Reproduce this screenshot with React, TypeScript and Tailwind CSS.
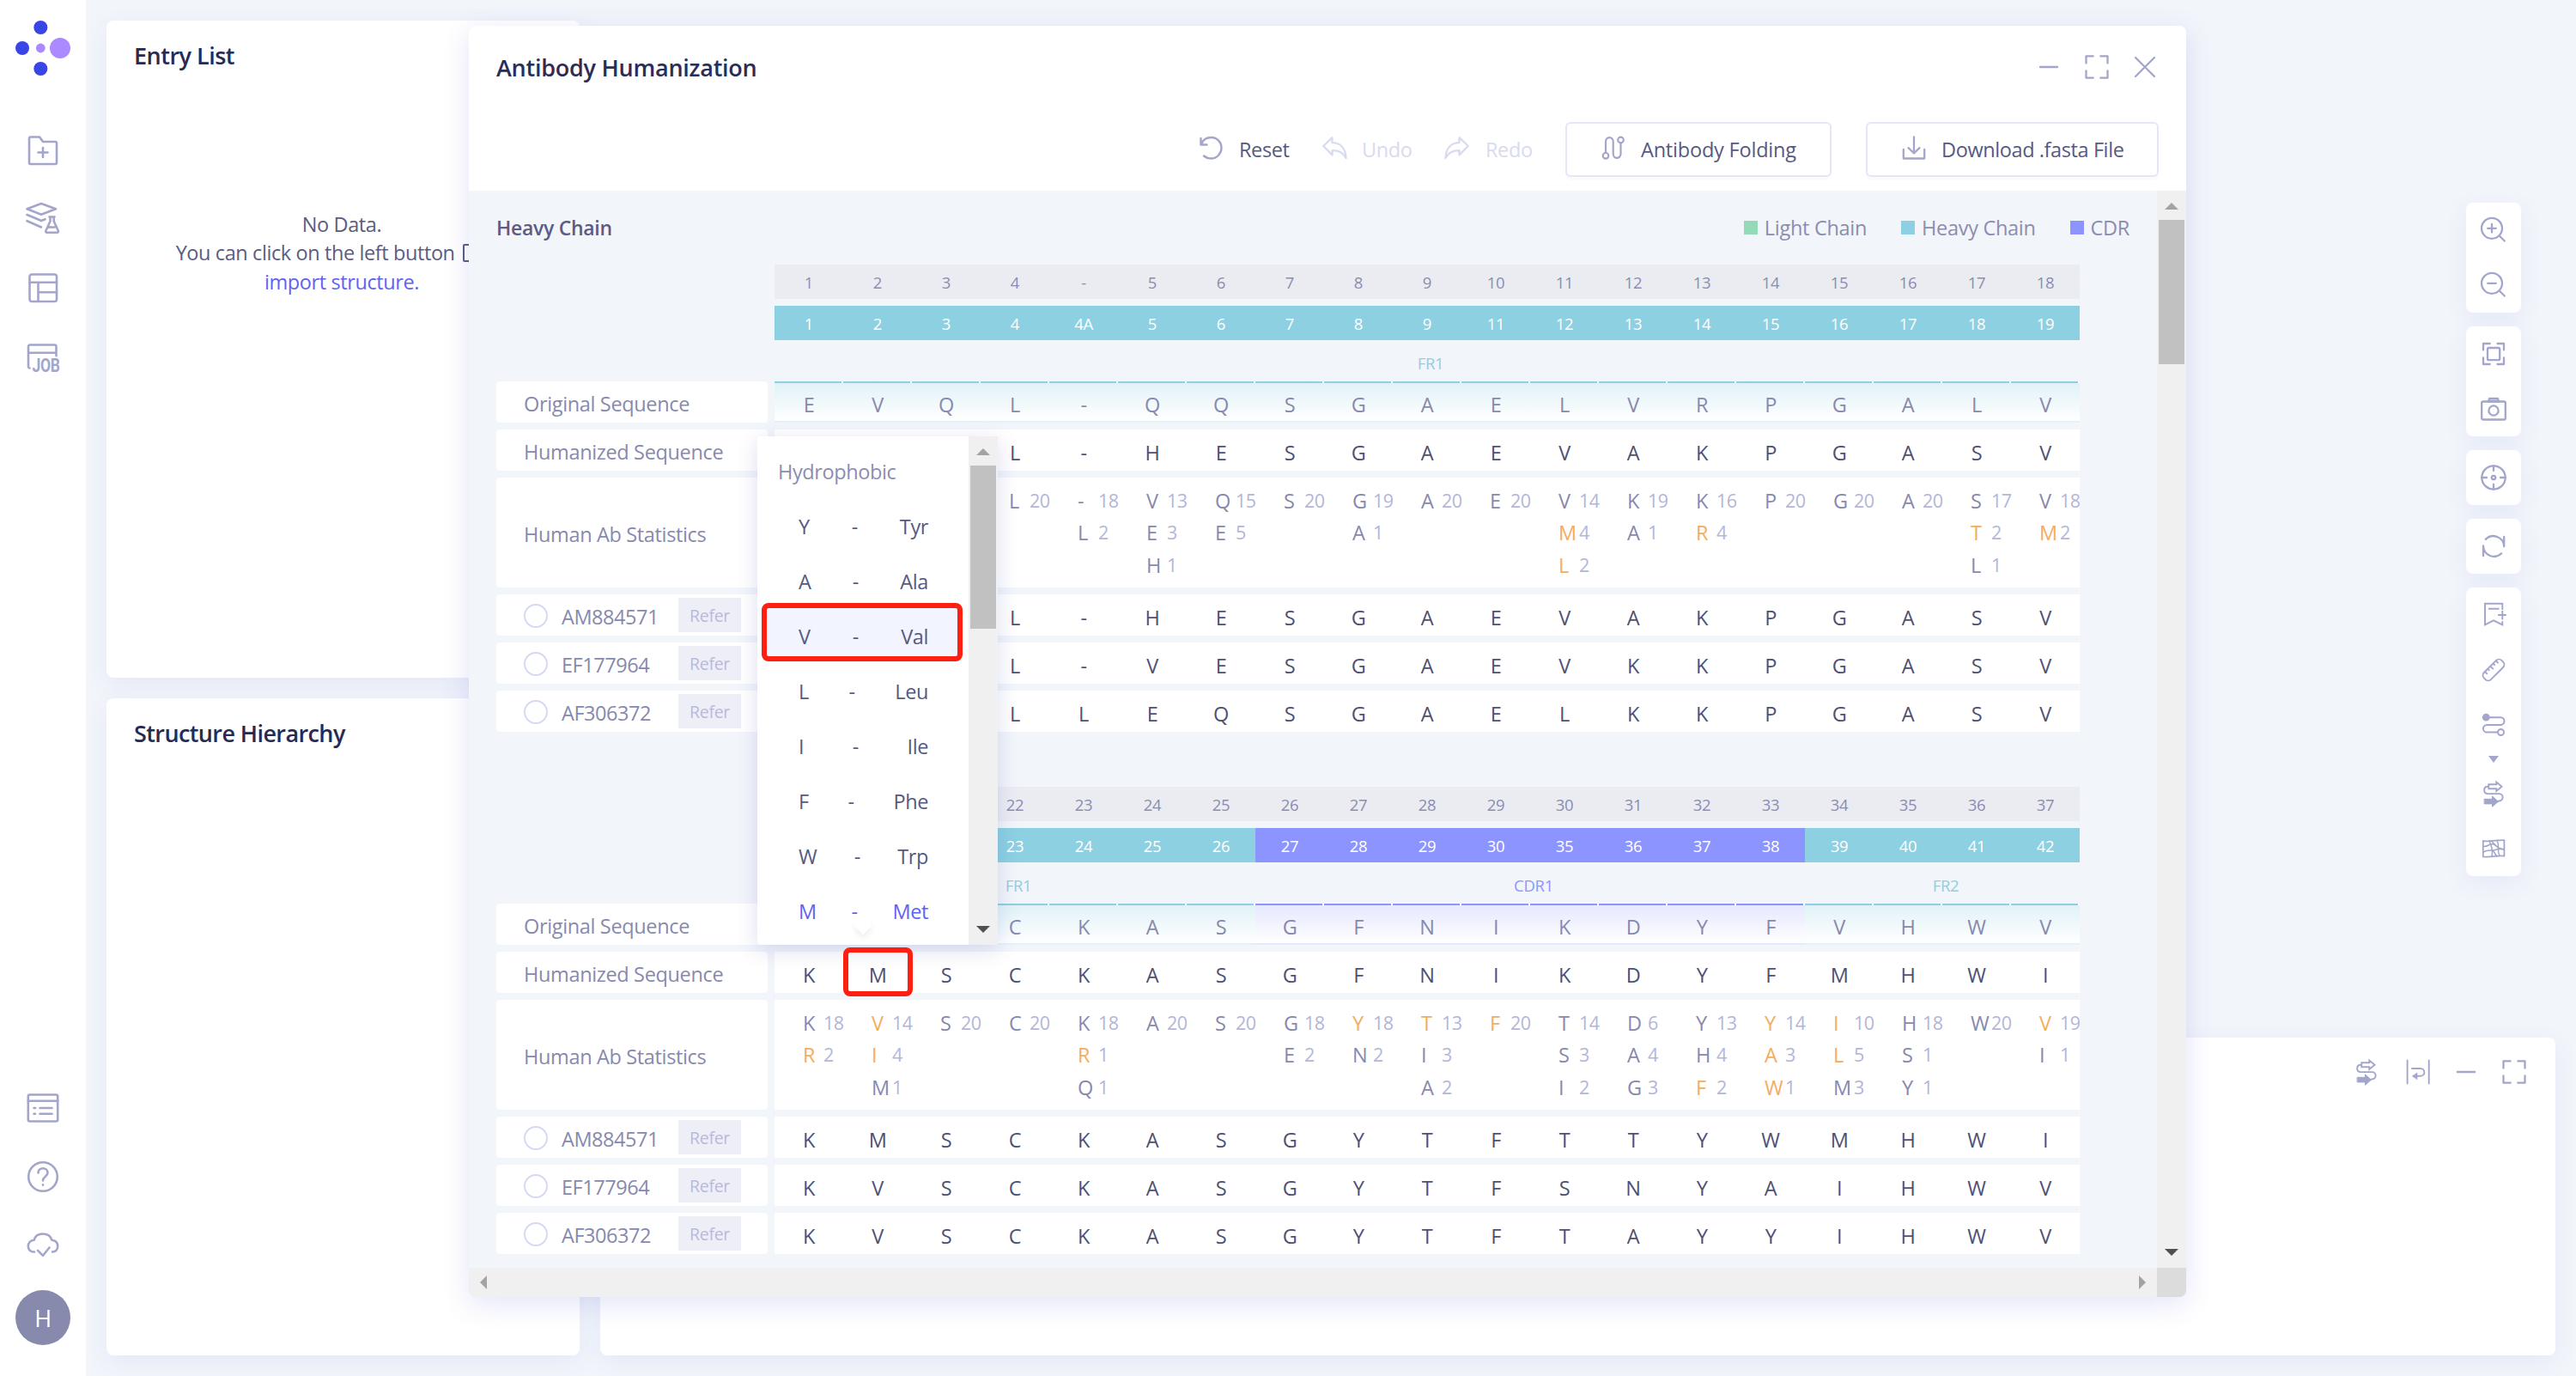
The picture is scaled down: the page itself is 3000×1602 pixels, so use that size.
import type { ReactNode } from "react";

type Stat = [letter: string, count: number, highlighted?: boolean];

interface Band {
  label: string;
  kind: "fr" | "cdr";
  span: number;
}

interface Group {
  top: string[];
  bottom: string[];
  bands: Band[];
  original: string;
  humanized: string;
  stats: Stat[][];
  refs: { id: string; seq: string }[];
}

const groups: Group[] = [
  {
    top: ["1", "2", "3", "4", "-", "5", "6", "7", "8", "9", "10", "11", "12", "13", "14", "15", "16", "17", "18"],
    bottom: ["1", "2", "3", "4", "4A", "5", "6", "7", "8", "9", "11", "12", "13", "14", "15", "16", "17", "18", "19"],
    bands: [{ label: "FR1", kind: "fr", span: 19 }],
    original: "EVQL-QQSGAELVRPGALV",
    humanized: "   L-HESGAEVAKPGASV",
    stats: [
      [],
      [],
      [],
      [["L", 20]],
      [["-", 18], ["L", 2]],
      [["V", 13], ["E", 3], ["H", 1]],
      [["Q", 15], ["E", 5]],
      [["S", 20]],
      [["G", 19], ["A", 1]],
      [["A", 20]],
      [["E", 20]],
      [["V", 14], ["M", 4, true], ["L", 2, true]],
      [["K", 19], ["A", 1]],
      [["K", 16], ["R", 4, true]],
      [["P", 20]],
      [["G", 20]],
      [["A", 20]],
      [["S", 17], ["T", 2, true], ["L", 1]],
      [["V", 18], ["M", 2, true]],
    ],
    refs: [
      { id: "AM884571", seq: "   L-HESGAEVAKPGASV" },
      { id: "EF177964", seq: "   L-VESGAEVKKPGASV" },
      { id: "AF306372", seq: "   LLEQSGAELKKPGASV" },
    ],
  },
  {
    top: ["", "", "", "22", "23", "24", "25", "26", "27", "28", "29", "30", "31", "32", "33", "34", "35", "36", "37"],
    bottom: ["", "", "", "23", "24", "25", "26", "27", "28", "29", "30", "35", "36", "37", "38", "39", "40", "41", "42"],
    bands: [
      { label: "FR1", kind: "fr", span: 7 },
      { label: "CDR1", kind: "cdr", span: 8 },
      { label: "FR2", kind: "fr", span: 4 },
    ],
    original: "   CKASGFNIKDYFVHWV",
    humanized: "KMSCKASGFNIKDYFMHWI",
    stats: [
      [["K", 18], ["R", 2, true]],
      [["V", 14, true], ["I", 4, true], ["M", 1]],
      [["S", 20]],
      [["C", 20]],
      [["K", 18], ["R", 1, true], ["Q", 1]],
      [["A", 20]],
      [["S", 20]],
      [["G", 18], ["E", 2]],
      [["Y", 18, true], ["N", 2]],
      [["T", 13, true], ["I", 3], ["A", 2]],
      [["F", 20, true]],
      [["T", 14], ["S", 3], ["I", 2]],
      [["D", 6], ["A", 4], ["G", 3]],
      [["Y", 13], ["H", 4], ["F", 2, true]],
      [["Y", 14, true], ["A", 3, true], ["W", 1, true]],
      [["I", 10, true], ["L", 5, true], ["M", 3]],
      [["H", 18], ["S", 1], ["Y", 1]],
      [["W", 20]],
      [["V", 19, true], ["I", 1]],
    ],
    refs: [
      { id: "AM884571", seq: "KMSCKASGYTFTTYWMHWI" },
      { id: "EF177964", seq: "KVSCKASGYTFSNYAIHWV" },
      { id: "AF306372", seq: "KVSCKASGYTFTAYYIHWV" },
    ],
  },
];

const aminoAcids = [
  ["Y", "Tyr"],
  ["A", "Ala"],
  ["V", "Val"],
  ["L", "Leu"],
  ["I", "Ile"],
  ["F", "Phe"],
  ["W", "Trp"],
  ["M", "Met"],
];

/* ---------- icons ---------- */

function Icon({ size = 32, width = 2.2, className = "", children }: { size?: number; width?: number; className?: string; children: ReactNode }) {
  return (
    <svg
      width={size}
      height={size}
      viewBox={`0 0 ${size} ${size}`}
      fill="none"
      stroke="currentColor"
      strokeWidth={width}
      strokeLinecap="round"
      strokeLinejoin="round"
      className={`shrink-0 overflow-visible ${className}`}
    >
      {children}
    </svg>
  );
}

const Logo = () => (
  <svg width="66" height="66" viewBox="0 0 66 66" className="shrink-0">
    <circle cx="30.3" cy="9" r="8" fill="#3a45e6" />
    <circle cx="9" cy="33" r="8" fill="#3a45e6" />
    <circle cx="30.3" cy="57" r="8" fill="#3a45e6" />
    <circle cx="30.3" cy="33" r="5.4" fill="#ab89ff" />
    <circle cx="53" cy="33" r="12" fill="#ab89ff" />
  </svg>
);

const FolderPlus = () => (
  <Icon size={40} width={2.6}>
    <path d="M4 34.5V6a1.5 1.5 0 0 1 1.5-1.5H16l4 5.5h14.5A1.5 1.5 0 0 1 36 11.500v23a1.500 1.500 0 0 1-1.500 1.500h-29A1.500 1.500 0 0 1 4 34.500ZM20 17v11M14.500 22.500h11" />
  </Icon>
);
const LayersFlask = () => (
  <Icon size={40} width={2.6}>
    <path d="M18 2 35 8.300 18 14.800 1.500 8.300ZM1.500 15 18 22l4.500-1.700M1.500 22.200 18 29.500" />
    <path d="M27.500 17.500h6M28.500 17.500v5L23.500 33.500q-.8 2.200 1.300 2.200h11.600q2.100 0 1.300-2.200l-5-11v-5M26 30c3-2 5 1.500 9.500-1.500" />
  </Icon>
);
const LayoutIcon = () => (
  <Icon size={40} width={2.6}>
    <rect x="4.500" y="4.500" width="31.500" height="31.500" rx="2.500" />
    <path d="M4.500 13.800H36M14.500 13.800V36M14.500 25.200H36" />
  </Icon>
);
const JobIcon = () => (
  <Icon size={40} width={2.6}>
    <path d="M4.500 33.500A1.800 1.800 0 0 1 3 32V8.500a2 2 0 0 1 2-2h28.500a2 2 0 0 1 2 2v10.800M3 15.800h32.500" />
    <text x="7.500" y="37.800" fontSize="21.500" fontWeight="700" textLength="32" lengthAdjust="spacingAndGlyphs" fill="currentColor" stroke="none" fontFamily="Roboto, sans-serif">
      JOB
    </text>
  </Icon>
);
const ListIcon = () => (
  <Icon size={40} width={2.6}>
    <rect x="2.800" y="4.500" width="34.400" height="31" rx="2" />
    <path d="M2.800 11.700h34.400M9.500 20h1.500M16.500 20h14M9.500 26.800h1.500M16.500 26.800h14" />
  </Icon>
);
const HelpIcon = () => (
  <Icon size={40} width={2.6}>
    <circle cx="20" cy="20" r="16.800" />
    <path d="M14.500 15.500c0-3.200 2.300-5.300 5.500-5.300s5.500 2.200 5.500 5.200c0 4.200-5.500 4.400-5.500 9M20 29.300v.4" />
  </Icon>
);
const CloudCheck = () => (
  <Icon size={40} width={2.600}>
    <path d="M10 27.500C5.500 27.800 2.800 25 2.800 20.800c0-4 2.900-6.800 6.900-7.100C10.800 9.200 14.700 6.500 20 6.500s9 2.800 10.300 7.200c4.200.4 6.900 3.100 6.900 7.300 0 4-2.500 6.500-6.200 6.500M14 25.800l6 6 7.500-9.300" />
  </Icon>
);

const ZoomIn = () => (
  <Icon width={2.300}>
    <circle cx="14" cy="13.800" r="12" />
    <path d="M14 9v9.600M9.200 13.800h9.600M22.800 22.500l6 6" />
  </Icon>
);
const ZoomOut = () => (
  <Icon width={2.300}>
    <circle cx="14" cy="13.800" r="12" />
    <path d="M9.200 13.800h9.600M22.800 22.500l6 6" />
  </Icon>
);
const FocusIcon = () => (
  <Icon width={2.300}>
    <path d="M4 11.500V4h7.700M20.500 4H28v7.500M28 20.500V28h-7.500M11.700 28H4v-7.500" />
    <rect x="9" y="9" width="14.200" height="14.200" rx="1.500" />
  </Icon>
);
const CameraIcon = () => (
  <Icon width={2.300}>
    <path d="M10 7.500 11.200 3.800h9.600L22 7.500Z" fill="#c6c8e0" />
    <rect x="2.200" y="7.500" width="27.600" height="21" rx="1.500" />
    <circle cx="16" cy="18" r="5.600" />
  </Icon>
);
const CrosshairIcon = () => (
  <Icon width={2.300}>
    <circle cx="16" cy="16" r="13.700" />
    <circle cx="16" cy="16" r="2.200" />
    <path d="M16 2.500v5.500M16 24v5.500M2.500 16H8M24 16h5.500" />
  </Icon>
);
const RefreshIcon = () => (
  <Icon width={2.300}>
    <path d="M6.800 7.900A12.500 12.500 0 0 1 28.200 16M28.200 5v11.300M25.200 24.300A12.500 12.500 0 0 1 4 16M4 27.200V15.500" />
  </Icon>
);
const BookmarkPlus = () => (
  <Icon width={1.900}>
    <path d="M26.300 10V2.800H6V27.400l10-5.100 10.300 5.100V23.300M10 8.800h12.500M26.300 11v10.500M21 16h9.800" strokeLinecap="butt" strokeLinejoin="miter" />
  </Icon>
);
const RulerIcon = () => (
  <Icon width={1.900}>
    <g transform="rotate(-45 16 16)">
      <rect x="1.500" y="10.300" width="29" height="11.400" rx="4.500" />
      <path d="M7.500 10.500v3M12 10.500v2M16.500 10.500v4M21 10.500v2M25.500 10.500v3" />
    </g>
  </Icon>
);
const RouteIcon = () => (
  <Icon width={2}>
    <circle cx="7.300" cy="7.200" r="3.400" fill="currentColor" />
    <path d="M8 7.200h16.200a4.300 4.300 0 0 1 0 8.700H8.300a4.300 4.300 0 0 0 0 8.700h12" />
    <circle cx="24.500" cy="24.500" r="3.500" />
  </Icon>
);
const TransferIcon = () => (
  <Icon width={1.900}>
    <path d="M10 7.800H8.700a4.200 4.200 0 0 0 0 8.300h13.600a4.100 4.100 0 0 1 .4 8.300l-2 .6" />
    <path d="M10.300 5.300h9V2.600l6.200 5.200-6.200 5.200v-2.700h-9Z" strokeLinejoin="miter" />
    <path d="M5.500 22.300h9V19l7 6.200-7 6v-3.300h-9Z" fill="currentColor" strokeWidth="1" />
  </Icon>
);
const MapIcon = () => (
  <Icon width={1.800}>
    <path d="M3.800 6.800c6 1.800 12-.8 24.600-.6v18.500c-8-1.500-15 2-24.600.7Z" />
    <path d="M4 13.500c6 .5 6-3 11-3 5 2 7 7 13 6.500M4 20c5-3 9-1.500 12-2s6-2.500 12-1.500M11 7c1 5 5 6 3 18.500M20 6.500c4 7-1 10 3 18M15 18l5 7M13 6.800l9 9" strokeWidth="1.500" />
  </Icon>
);
const WrapIcon = () => (
  <Icon width={1.900}>
    <path d="M3.600 2.500v27M28.700 2.500v27M9 12h9.500c6.500 0 6.500 8.800 0 8.800H11" />
    <path d="M9.500 20.800 15 17v7.600Z" fill="currentColor" strokeWidth=".6" />
  </Icon>
);
const MinusIcon = () => (
  <Icon width={2.400}>
    <path d="M6 16h20" />
  </Icon>
);
const FullscreenIcon = () => (
  <Icon width={2.300}>
    <path d="M3.500 11.500v-8.200h8.200M20.300 3.300h8.200v8.200M28.500 20.500v8.200h-8.200M11.700 28.700H3.500v-8.200" />
  </Icon>
);
const CloseIcon = () => (
  <Icon width={2.300}>
    <path d="M5 5l22 22M27 5 5 27" />
  </Icon>
);
const ResetIcon = () => (
  <Icon size={28} width={2.400}>
    <path d="M2.500 3v7.500h7M3 10C5 4.500 9.500 2 14.500 2 21.500 2 26.500 7.500 26.500 14s-5 12.500-12 12.500c-3.500 0-6-1-8.500-3" />
  </Icon>
);
const UndoIcon = () => (
  <Icon size={28} width={2.300}>
    <path d="M1.200 12 11.500 2.200v6C20 8.200 26.800 13.500 27.600 26c-3.600-6.300-8.500-9-16.100-8.800v5.200Z" />
  </Icon>
);
const RedoIcon = () => (
  <Icon size={28} width={2.300} className="-scale-x-100">
    <path d="M1.200 12 11.500 2.200v6C20 8.200 26.800 13.500 27.600 26c-3.600-6.300-8.500-9-16.100-8.800v5.200Z" />
  </Icon>
);
const FoldingIcon = () => (
  <Icon size={28} width={2.200}>
    <circle cx="5" cy="23.300" r="3.300" />
    <circle cx="22.500" cy="5" r="3.300" />
    <path d="M5 20V7c0-6.500 8.700-6.500 8.700 0v14c0 6.500 8.800 6.500 8.800 0V8.300" />
  </Icon>
);
const DownloadIcon = () => (
  <Icon size={28} width={2.300}>
    <path d="M14 1.500V20M7.500 14.200 14 20.500l6.500-6.300M1.800 16v10.500h24.400V16" />
  </Icon>
);

/* ---------- scroll bar pieces ---------- */

const ArrowUp = () => <span className="h-0 w-0 border-x-8 border-b-8 border-x-transparent border-b-[#a3a3a3]" />;
const ArrowDown = () => <span className="h-0 w-0 border-x-8 border-t-8 border-x-transparent border-t-[#505050]" />;
const ArrowLeft = () => <span className="h-0 w-0 border-y-8 border-r-8 border-y-transparent border-r-[#a3a3a3]" />;
const ArrowRight = () => <span className="h-0 w-0 border-y-8 border-l-8 border-y-transparent border-l-[#a3a3a3]" />;

/* ---------- sequence table ---------- */

function LabelBox({ tall = false, children }: { tall?: boolean; children: ReactNode }) {
  return (
    <div className={`flex w-[316px] shrink-0 items-center rounded bg-white pt-[3px] pl-8 tracking-[-0.35px] text-[#8789ad] ${tall ? "h-32" : "h-12"}`}>
      {children}
    </div>
  );
}

function SequenceRow({ label, seq }: { label: ReactNode; seq: string }) {
  return (
    <div className="flex gap-2">
      <LabelBox>{label}</LabelBox>
      <div className="grid w-[1520px] grid-cols-[repeat(19,80px)] bg-white pt-[5px] text-[#4d5077]">
        {seq.split("").map((c, i) => (
          <span key={i} className="flex items-center justify-center">
            {c.trim()}
          </span>
        ))}
      </div>
    </div>
  );
}

function SequenceGroup({ group }: { group: Group }) {
  const kinds = group.bands.flatMap((b) => Array<Band["kind"]>(b.span).fill(b.kind));
  return (
    <section>
      <div className="ml-[324px] w-[1520px] text-[18.500px] tracking-[-0.3px]">
        <div className="grid h-10 grid-cols-[repeat(19,80px)] bg-[#ebecf2] pt-[2px] text-[#8b8daf]">
          {group.top.map((n, i) => (
            <span key={i} className="flex items-center justify-center">
              {n}
            </span>
          ))}
        </div>
        <div className="mt-2 grid h-10 grid-cols-[repeat(19,80px)] text-white">
          {group.bottom.map((n, i) => (
            <span key={i} className={`flex items-center justify-center pt-[2px] ${kinds[i] === "fr" ? "bg-[#8cd0e1]" : "bg-[#8c95ff]"}`}>
              {n}
            </span>
          ))}
        </div>
        <div className="grid h-12 grid-cols-[repeat(19,80px)]">
          {group.bands.map((b, i) => (
            <span
              key={i}
              style={{ gridColumn: `span ${b.span}` }}
              className={`flex items-center justify-center pt-[6px] pl-2 ${b.kind === "fr" ? "text-[#8cd0e1]" : "text-[#8c95ff]"}`}
            >
              {b.label}
            </span>
          ))}
        </div>
      </div>

      <div className="flex flex-col gap-2">
        <div className="flex gap-2">
          <LabelBox>Original Sequence</LabelBox>
          <div className="grid h-12 w-[1520px] grid-cols-[repeat(19,80px)] text-[#8789ad]">
            {group.original.split("").map((c, i) => (
              <span
                key={i}
                className={`relative flex items-center justify-center border-y-2 bg-linear-to-b to-white pt-[5px] ${
                  kinds[i] === "fr" ? "border-t-[#8cd0e1] border-b-[#e2f3f7] from-[#e0f2f7]" : "border-t-[#8c95ff] border-b-[#e6e8ff] from-[#e6e8fe]"
                }`}
              >
                {c.trim()}
                <i className="absolute -top-[2px] right-0 h-[2px] w-[2px] bg-white" />
              </span>
            ))}
          </div>
        </div>

        <SequenceRow label="Humanized Sequence" seq={group.humanized} />

        <div className="flex gap-2">
          <LabelBox tall>Human Ab Statistics</LabelBox>
          <div className="grid w-[1520px] grid-cols-[repeat(19,80px)] overflow-hidden bg-white pt-2">
            {group.stats.map((cell, i) => (
              <div key={i} className="pl-[33px]">
                {cell.map(([letter, count, hot], j) => (
                  <div key={j} className={`flex h-[37.500px] items-center ${hot ? "text-[#f3ad60]" : "text-[#8789ad]"}`}>
                    <span className="w-6 shrink-0">{letter}</span>
                    <span className="text-[21.500px] tracking-[-0.6px] text-[#b3b6d8]">{count}</span>
                  </div>
                ))}
              </div>
            ))}
          </div>
        </div>

        {group.refs.map((r) => (
          <SequenceRow
            key={r.id}
            seq={r.seq}
            label={
              <>
                <span className="-mt-px h-7 w-7 shrink-0 rounded-full border-2 border-[#d5d9f4]" />
                <span className="w-[152px] shrink-0 pl-4 tracking-[-0.45px]">{r.id}</span>
                <span className="-mt-[3px] flex h-10 w-[73px] items-center justify-center bg-[#eeeff6] pt-[2px] text-[19.500px] tracking-[-0.3px] text-[#b7bade]">
                  Refer
                </span>
              </>
            }
          />
        ))}
      </div>
    </section>
  );
}

/* ---------- shell ---------- */

function Sidebar() {
  return (
    <nav className="flex h-full w-[100px] shrink-0 flex-col items-center bg-white pt-[23px] pb-9 text-[#a3a6ca]">
      <Logo />
      <div className="mt-[66px] flex flex-col gap-10">
        <FolderPlus />
        <LayersFlask />
        <LayoutIcon />
        <JobIcon />
      </div>
      <div className="mt-auto flex flex-col gap-10">
        <ListIcon />
        <HelpIcon />
        <CloudCheck />
      </div>
      <div className="mt-8 flex h-16 w-16 items-center justify-center rounded-full bg-[#888aad] pt-[2px] text-[27px] text-white">H</div>
    </nav>
  );
}

function Card({ className = "", children }: { className?: string; children?: ReactNode }) {
  return <div className={`rounded-lg bg-white shadow-[0_8px_28px_rgba(80,90,220,0.08)] ${className}`}>{children}</div>;
}

function ToolGroup({ children }: { children: ReactNode[] | ReactNode }) {
  return <Card className="flex w-16 flex-col items-center">{children}</Card>;
}

function Tool({ children }: { children: ReactNode }) {
  return <span className="flex h-16 w-16 items-center justify-center">{children}</span>;
}

function ViewerTools() {
  return (
    <div className="flex flex-col gap-4 text-[#a3a6ca]">
      <ToolGroup>
        <Tool><ZoomIn /></Tool>
        <Tool><ZoomOut /></Tool>
      </ToolGroup>
      <ToolGroup>
        <Tool><FocusIcon /></Tool>
        <Tool><CameraIcon /></Tool>
      </ToolGroup>
      <ToolGroup>
        <Tool><CrosshairIcon /></Tool>
      </ToolGroup>
      <ToolGroup>
        <Tool><RefreshIcon /></Tool>
      </ToolGroup>
      <ToolGroup>
        <Tool><BookmarkPlus /></Tool>
        <Tool><RulerIcon /></Tool>
        <Tool><RouteIcon /></Tool>
        <span className="flex h-4 items-center">
          <span className="h-0 w-0 border-x-[6px] border-t-8 border-x-transparent border-t-[#a3a6ca]" />
        </span>
        <Tool><TransferIcon /></Tool>
        <Tool><MapIcon /></Tool>
      </ToolGroup>
    </div>
  );
}

function ResiduePicker() {
  return (
    <div className="absolute top-[478px] left-[336px] flex h-[592px] w-[280px] overflow-hidden rounded-l bg-white shadow-[0_6px_24px_rgba(80,85,180,0.2)]">
      <div className="relative flex w-[246px] flex-col pt-[14px]">
        <p className="mb-[2px] flex h-[52px] items-center pt-[2px] pl-6 text-[#8b8daf]">Hydrophobic</p>
        <span className="absolute top-[561px] left-[115px] h-[16px] w-[16px] rotate-45 bg-white shadow-[3px_3px_7px_rgba(0,0,0,0.07)]" />
        {aminoAcids.map(([one, three]) => (
          <div
            key={one}
            className={`relative mx-[10px] flex h-16 shrink-0 items-center justify-between pt-[9px] pr-[37px] pl-[38px] ${
              one === "V" ? "bg-[#f2f5ff] text-[#565980]" : one === "M" ? "text-[#6062f6]" : "text-[#565980]"
            }`}
          >
            <span>{one}</span>
            <span>-</span>
            <span>{three}</span>
          </div>
        ))}
      </div>
      <div className="flex w-[34px] flex-col items-center bg-[#f0f0f0] pt-[14px] pb-[14px]">
        <ArrowUp />
        <div className="mt-3 h-[190px] w-[30px] bg-[#c1c1c1]" />
        <div className="mt-auto flex">
          <ArrowDown />
        </div>
      </div>
    </div>
  );
}

function Legend({ color, children }: { color: string; children: ReactNode }) {
  return (
    <span className="flex items-center gap-2 tracking-[-0.3px]">
      <i className={`h-4 w-4 ${color}`} />
      {children}
    </span>
  );
}

function HumanizationWindow() {
  return (
    <div className="absolute top-[30px] left-[546px] h-[1480px] w-[2000px] rounded-lg bg-[#f2f5fa] shadow-[0_8px_32px_rgba(80,90,220,0.16)]">
      <div className="flex h-full flex-col overflow-hidden rounded-lg">
        <header className="flex h-[192px] shrink-0 flex-col bg-white px-8">
          <div className="flex h-24 items-center justify-between">
            <h2 className="pt-px text-[27px] font-semibold tracking-[-0.25px] text-[#2b2d58]">Antibody Humanization</h2>
            <div className="flex gap-6 text-[#a3a6ca]">
              <MinusIcon />
              <FullscreenIcon />
              <CloseIcon />
            </div>
          </div>
          <div className="mt-4 flex items-center justify-end">
            <span className="flex w-[144px] items-center gap-[19px] text-[#565980]">
              <span className="-mt-[5px] text-[#a3a6ca]"><ResetIcon /></span>Reset
            </span>
            <span className="flex w-[143px] items-center gap-[18px] text-[#d8daf0]">
              <span className="-mt-[5px]"><UndoIcon /></span>Undo
            </span>
            <span className="flex w-[140px] items-center gap-[19px] text-[#d8daf0]">
              <span className="-mt-[5px]"><RedoIcon /></span>Redo
            </span>
            <button className="flex h-16 w-[310px] items-center gap-[18px] rounded-md border-2 border-[#e6e6f7] bg-white pl-[40px] tracking-[-0.2px] text-[#565980] shadow-[0_4px_0_rgba(0,0,0,0.016)]">
              <span className="-mt-[5px] text-[#a3a6ca]"><FoldingIcon /></span>Antibody Folding
            </button>
            <button className="ml-10 flex h-16 w-[341px] items-center gap-[18px] rounded-md border-2 border-[#e6e6f7] bg-white pl-[40px] text-[#565980] shadow-[0_4px_0_rgba(0,0,0,0.016)]">
              <span className="-mt-[5px] text-[#a3a6ca]"><DownloadIcon /></span>Download .fasta File
            </button>
          </div>
        </header>

        <div className="grid min-h-0 flex-1 grid-cols-[1966px_34px] grid-rows-[1254px_34px]">
          <div className="overflow-hidden px-8">
            <div className="flex h-[86px] items-center justify-between">
              <h3 className="text-[23px] font-semibold tracking-[-0.3px] text-[#5a5c84]">Heavy Chain</h3>
              <div className="flex gap-10 text-[#8b8daf]">
                <Legend color="bg-[#94d9b8]">Light Chain</Legend>
                <Legend color="bg-[#8cd0e1]">Heavy Chain</Legend>
                <Legend color="bg-[#8c95ff]">CDR</Legend>
              </div>
            </div>
            <div className="flex flex-col gap-16">
              {groups.map((g, i) => (
                <SequenceGroup key={i} group={g} />
              ))}
            </div>
          </div>
          <div className="flex flex-col items-center bg-[#f0f0f0] pt-[14px] pb-[14px]">
            <ArrowUp />
            <div className="mt-3 h-[168px] w-[30px] bg-[#c1c1c1]" />
            <div className="mt-auto flex">
              <ArrowDown />
            </div>
          </div>
          <div className="flex items-center justify-between bg-[#f0f0f0] pr-[13px] pl-[13px]">
            <ArrowLeft />
            <ArrowRight />
          </div>
          <div className="bg-[#dcdcdc]" />
        </div>
      </div>

      <ResiduePicker />
      <div className="absolute top-[672px] left-[341px] h-[68px] w-[234px] rounded-lg border-6 border-[#fd1f12]" />
      <div className="absolute top-[1073px] left-[436px] h-[57px] w-[81px] rounded-lg border-6 border-[#fd1f12]" />
    </div>
  );
}

export default function App() {
  return (
    <div className="relative flex h-[1602px] w-[3000px] overflow-hidden bg-[#f2f5fa] font-['Open_Sans',sans-serif] text-[23.500px] leading-[34px] tracking-[-0.4px]">
      <Sidebar />
      <main className="flex flex-1 gap-6 p-6">
        <div className="flex w-[551px] shrink-0 flex-col gap-6">
          <Card className="h-[765px] px-8 pt-[19px]">
            <h2 className="text-[27px] leading-[44px] font-semibold tracking-[-0.5px] text-[#272a52]">Entry List</h2>
            <div className="mt-[158px] mr-[3px] flex flex-col items-center leading-[33.500px] text-[#5a5c84]">
              <p>No Data.</p>
              <p className="-mt-px mb-px flex items-center whitespace-nowrap">
                You can click on the left button
                <svg width="24" height="24" viewBox="0 0 24 24" fill="none" stroke="currentColor" strokeWidth="2" className="mx-[8px]">
                  <path d="M2 21V4q0-1 1-1h6l3 3h9q1 0 1 1v14q0 1-1 1H3q-1 0-1-1ZM12 10v8M8 14h8" />
                </svg>
                to
              </p>
              <p className="text-[#6062f6]">import structure.</p>
            </div>
          </Card>
          <Card className="h-[765px] px-8 pt-[19px]">
            <h2 className="text-[27px] leading-[44px] font-semibold tracking-[-0.6px] text-[#272a52]">Structure Hierarchy</h2>
          </Card>
        </div>
        <div className="flex flex-1 flex-col items-end">
          <div className="mt-[212px] mr-10">
            <ViewerTools />
          </div>
          <Card className="mt-auto h-[370px] w-full">
            <div className="flex justify-end gap-6 px-8 pt-6 text-[#a3a6ca]">
              <span className="mr-1"><TransferIcon /></span>
              <WrapIcon />
              <MinusIcon />
              <FullscreenIcon />
            </div>
          </Card>
        </div>
      </main>
      <HumanizationWindow />
    </div>
  );
}
